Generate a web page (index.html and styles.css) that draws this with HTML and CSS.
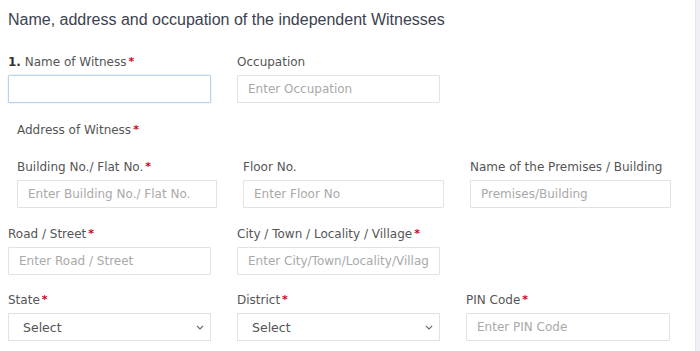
FILE: index.html
```html
<!DOCTYPE html>
<html>
<head>
<meta charset="utf-8">
<link rel="stylesheet" href="styles.css">
</head>
<body>
<div class="page">
  <main class="content">
    <h2 class="title">Name, address and occupation of the independent Witnesses</h2>
    <div class="row row-first">
      <div class="field">
        <label class="lbl"><b>1.</b> Name of Witness<span class="req">*</span></label>
        <input class="inp focused" type="text">
      </div>
      <div class="field">
        <label class="lbl">Occupation</label>
        <input class="inp" type="text" placeholder="Enter Occupation">
      </div>
    </div>
    <div class="address">
      <div class="lbl addr-title">Address of Witness<span class="req">*</span></div>
      <div class="row addr-row">
        <div class="field">
          <label class="lbl">Building No./ Flat No.<span class="req">*</span></label>
          <input class="inp" type="text" placeholder="Enter Building No./ Flat No.">
        </div>
        <div class="field">
          <label class="lbl">Floor No.</label>
          <input class="inp" type="text" placeholder="Enter Floor No">
        </div>
        <div class="field">
          <label class="lbl">Name of the Premises / Building</label>
          <input class="inp" type="text" placeholder="Premises/Building">
        </div>
      </div>
    </div>
    <div class="row row-road">
      <div class="field">
        <label class="lbl">Road / Street<span class="req">*</span></label>
        <input class="inp" type="text" placeholder="Enter Road / Street">
      </div>
      <div class="field">
        <label class="lbl">City / Town / Locality / Village<span class="req">*</span></label>
        <input class="inp" type="text" placeholder="Enter City/Town/Locality/Village">
      </div>
    </div>
    <div class="row">
      <div class="field">
        <label class="lbl">State<span class="req">*</span></label>
        <div class="sel">Select<svg class="chev" width="8" height="5" viewBox="0 0 8 5"><path d="M0.8 0.8 L4 4 L7.2 0.8" fill="none" stroke="#666" stroke-width="1.1"/></svg></div>
      </div>
      <div class="field">
        <label class="lbl">District<span class="req">*</span></label>
        <div class="sel">Select<svg class="chev" width="8" height="5" viewBox="0 0 8 5"><path d="M0.8 0.8 L4 4 L7.2 0.8" fill="none" stroke="#666" stroke-width="1.1"/></svg></div>
      </div>
      <div class="field">
        <label class="lbl">PIN Code<span class="req">*</span></label>
        <input class="inp" type="text" placeholder="Enter PIN Code">
      </div>
    </div>
  </main>
  <div class="edge"></div>
</div>
</body>
</html>
```
FILE: styles.css
```css
* { box-sizing: border-box; }
html, body { margin: 0; padding: 0; background: #fff; }
body { font-family: "DejaVu Sans", Verdana, sans-serif; }
.page { display: flex; width: 700px; height: 351px; overflow: hidden; }
.content { flex: 1; padding: 10px 0 0 8px; }
.edge { width: 5px; background: #eef0f4; border-left: 1px solid #e6e8ec; }
.title {
  font-family: "Liberation Sans", Arial, sans-serif;
  font-weight: normal;
  font-size: 16px;
  line-height: 20px;
  color: #3b4250;
  margin: 0 0 24px 0;
}
.row { display: grid; grid-template-columns: 203px 203px 204px; column-gap: 26px; }
.row-first { margin-bottom: 19px; }
.row-road { margin-bottom: 17px; margin-top: 18px; }
.address { padding-left: 9px; }
.addr-row { grid-template-columns: 200px 201px 201px; column-gap: 26px; }
.field { display: flex; flex-direction: column; }
.lbl {
  font-size: 12px;
  line-height: 16px;
  color: #555;
  margin-bottom: 5px;
  white-space: nowrap;
}
.address .addr-title { margin-bottom: 21px; }
.lbl b { color: #333; }
.req { color: #d0021b; font-weight: bold; font-size: 11px; margin-left: 2px; vertical-align: 1px; }
.inp {
  height: 28px;
  border: 1px solid #e2e2e2;
  border-radius: 1px;
  padding: 0 10px;
  font-family: "DejaVu Sans", Verdana, sans-serif;
  font-size: 12px;
  color: #555;
  outline: none;
  background: #fff;
  width: 100%;
}
.inp::placeholder { color: #a9a9a9; }
.focused { border-color: #b8d3ea; box-shadow: 0 0 2px rgba(102, 160, 220, 0.35); }
.sel {
  height: 28px;
  border: 1px solid #e2e2e2;
  padding: 0 6px 0 14px;
  font-size: 12.5px;
  color: #555;
  display: flex;
  align-items: center;
  justify-content: space-between;
}
.chev { display: block; }
```
